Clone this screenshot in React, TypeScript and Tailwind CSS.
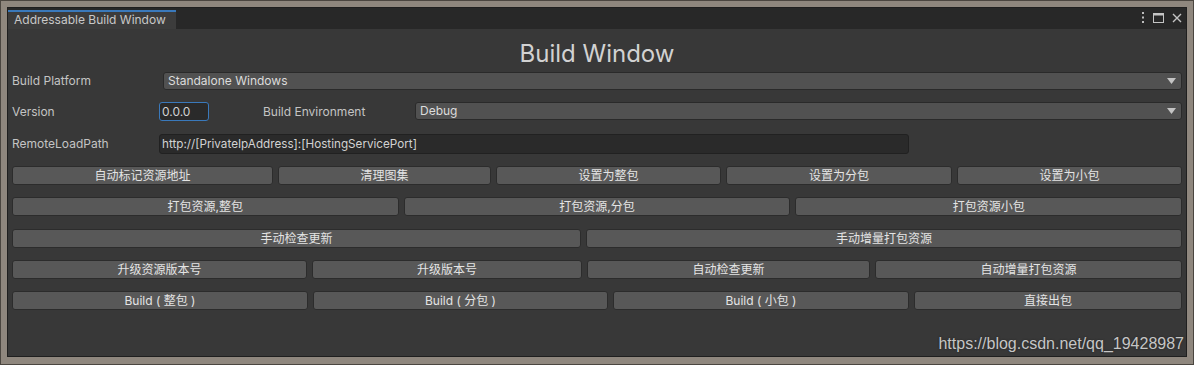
import React from "react";

const font = { fontFamily: "Inter, 'Noto Sans CJK SC', sans-serif" };

const btn =
  "h-[19px] rounded-[3px] bg-[#585858] border border-[#2c2c2c] text-[12px] text-[#e4e4e4] flex items-center justify-center whitespace-nowrap";

const popup =
  "h-[18px] rounded-[3px] bg-[#515151] border border-[#2a2a2a] flex items-center justify-between pl-[4px] pr-[5px] text-[12px] text-[#dcdcdc]";

function Arrow() {
  return (
    <svg width="9" height="6" viewBox="0 0 9 6">
      <path d="M0 0h9L4.5 6z" fill="#c4c4c4" />
    </svg>
  );
}

function Row({ cols, items }: { cols: string; items: string[] }) {
  return (
    <div className={`grid ${cols} gap-[5px]`}>
      {items.map(t => (
        <button key={t} className={btn}>{t}</button>
      ))}
    </div>
  );
}

export default function App() {
  return (
    <div className="w-[1194px] h-[365px] bg-[#4b4640] p-[1px]" style={font}>
      <div className="w-full h-full bg-[#8f877e] pl-[6px] pt-[6px] pr-[6px] pb-[7px]">
        <div className="relative w-full h-full border border-[#1f1f1f] bg-[#383838] flex flex-col overflow-hidden">
          {/* tab bar */}
          <div className="h-[21px] bg-[#282828] flex items-start shrink-0">
            <div className="mt-[2px] h-[19px] w-[168px] bg-[#3c3c3c] border-t-2 border-[#3a79bb] pl-[6px] text-[12px] text-[#c8c8c8] leading-[16px]">
              Addressable Build Window
            </div>
            <div className="ml-auto mr-[4px] mt-[4px] flex items-center gap-[8px]">
              <svg width="4" height="11" viewBox="0 0 4 11">
                <rect x="1" y="0" width="2" height="2" fill="#bdbdbd" />
                <rect x="1" y="4.5" width="2" height="2" fill="#bdbdbd" />
                <rect x="1" y="9" width="2" height="2" fill="#bdbdbd" />
              </svg>
              <svg width="11" height="10" viewBox="0 0 11 10">
                <rect x="0.5" y="0.5" width="10" height="9" fill="none" stroke="#c4c4c4" />
                <rect x="0.5" y="0.5" width="10" height="2" fill="#c4c4c4" />
              </svg>
              <svg width="10" height="10" viewBox="0 0 10 10">
                <path d="M1 1l8 8M9 1l-8 8" stroke="#c4c4c4" strokeWidth="1.4" />
              </svg>
            </div>
          </div>

          <div className="flex flex-col px-[4px]">
            <div className="mt-[11px] h-[28px] text-center text-[24px] leading-[28px] text-[#d2d2d2]">
              Build Window
            </div>

            {/* Build Platform */}
            <div className="mt-[4px] flex items-center h-[18px]">
              <span className="w-[151px] text-[12px] text-[#c4c4c4]">Build Platform</span>
              <div className={`${popup} flex-1`}>
                <span>Standalone Windows</span>
                <Arrow />
              </div>
            </div>

            {/* Version row */}
            <div className="mt-[12px] flex items-center h-[19px]">
              <span className="w-[147px] text-[12px] text-[#c4c4c4]">Version</span>
              <div className="w-[50px] h-[19px] rounded-[3px] bg-[#2a2a2a] border border-[#3a79bb] text-[12px] text-[#d2d2d2] pl-[2px] leading-[17px]">
                0.0.0
              </div>
              <span className="ml-[54px] w-[152px] text-[12px] text-[#c4c4c4]">Build Environment</span>
              <div className={`${popup} flex-1 self-start`}>
                <span>Debug</span>
                <Arrow />
              </div>
            </div>

            {/* RemoteLoadPath */}
            <div className="mt-[13px] flex items-center h-[20px]">
              <span className="w-[147px] text-[12px] text-[#c4c4c4]">RemoteLoadPath</span>
              <div className="w-[750px] h-[20px] rounded-[3px] bg-[#2a2a2a] border border-[#212121] text-[11.7px] text-[#d2d2d2] pl-[2px] leading-[18px]">
                http://[PrivateIpAddress]:[HostingServicePort]
              </div>
            </div>

            <div className="mt-[12px] flex flex-col gap-[12px]">
              <Row
                cols="grid-cols-[261px_213px_225px_226px_1fr]"
                items={["自动标记资源地址", "清理图集", "设置为整包", "设置为分包", "设置为小包"]}
              />
              <Row cols="grid-cols-3" items={["打包资源,整包", "打包资源,分包", "打包资源小包"]} />
              <div className="mt-[1px]">
                <Row cols="grid-cols-[569px_1fr]" items={["手动检查更新", "手动增量打包资源"]} />
              </div>
              <Row
                cols="grid-cols-[295px_270px_283px_1fr]"
                items={["升级资源版本号", "升级版本号", "自动检查更新", "自动增量打包资源"]}
              />
              <Row
                cols="grid-cols-[296px_295px_296px_1fr]"
                items={["Build ( 整包 )", "Build ( 分包 )", "Build ( 小包 )", "直接出包"]}
              />
            </div>
          </div>

          <div
            className="absolute right-[2px] bottom-[0px] text-[16px] text-[#c6c6c6] [text-shadow:0_0_2px_#202020]"
            style={{ fontFamily: "'Liberation Sans', Arial, sans-serif" }}
          >
            https://blog.csdn.net/qq_19428987
          </div>
        </div>
      </div>
    </div>
  );
}
